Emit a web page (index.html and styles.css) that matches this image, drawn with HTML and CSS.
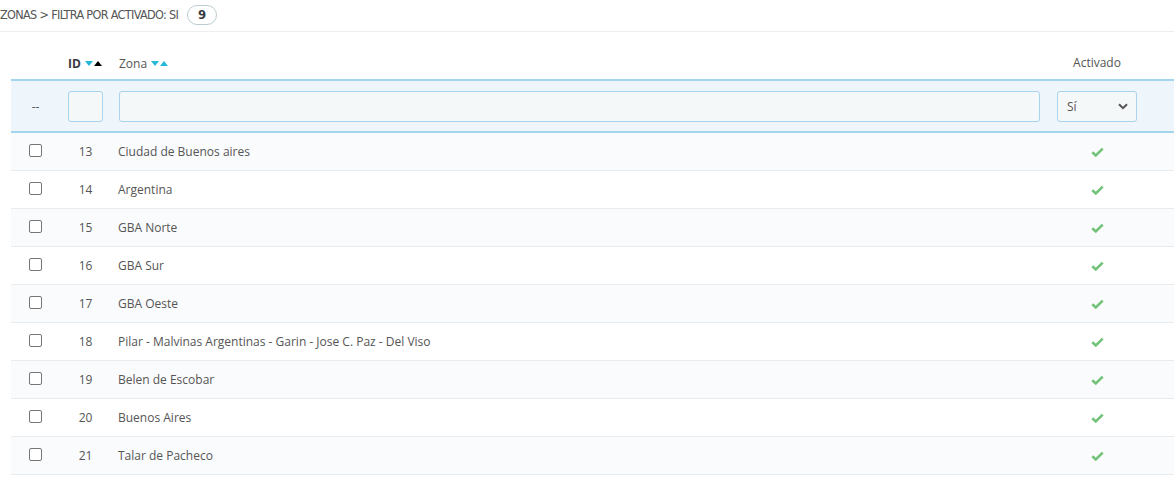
FILE: index.html
```html
<!DOCTYPE html>
<html lang="es">
<head>
    <meta charset="UTF-8">
    <title>Zonas</title>
    <link rel="stylesheet" href="styles.css">
</head>
<body>
    <div class="panel-heading">
        ZONAS &gt; FILTRA POR ACTIVADO: SI
        <span class="badge">9</span>
    </div>

    <table class="grid">
        <colgroup>
            <col class="c-check">
            <col class="c-id">
            <col class="c-name">
            <col class="c-active">
            <col class="c-actions">
        </colgroup>
        <thead>
            <tr class="heading">
                <th></th>
                <th><b class="title">ID</b><span class="sort"><i class="down"></i><i class="up active"></i></span></th>
                <th><span class="title">Zona</span><span class="sort"><i class="down"></i><i class="up"></i></span></th>
                <th class="center">Activado</th>
                <th></th>
            </tr>
            <tr class="filter">
                <td class="center">--</td>
                <td><input type="text" class="field"></td>
                <td><input type="text" class="field"></td>
                <td class="center">
                    <div class="select">Sí
                        <svg width="10" height="7" viewBox="0 0 10 7"><path d="M1 1.2 5 5.2 9 1.2" fill="none" stroke="#555" stroke-width="2"/></svg>
                    </div>
                </td>
                <td></td>
            </tr>
        </thead>
        <tbody id="rows"></tbody>
    </table>

    <script>
        const zonas = [
            [13, 'Ciudad de Buenos aires'],
            [14, 'Argentina'],
            [15, 'GBA Norte'],
            [16, 'GBA Sur'],
            [17, 'GBA Oeste'],
            [18, 'Pilar - Malvinas Argentinas - Garin - Jose C. Paz - Del Viso'],
            [19, 'Belen de Escobar'],
            [20, 'Buenos Aires'],
            [21, 'Talar de Pacheco']
        ];
        const tick = '<svg width="13" height="10" viewBox="0 0 13 10"><path d="M1.3 5.2 4.8 8.4 11.7 1.6" fill="none" stroke="#72c279" stroke-width="2.6"/></svg>';
        const tbody = document.getElementById('rows');
        zonas.forEach(([id, name]) => {
            const tr = document.createElement('tr');
            tr.innerHTML = `<td class="center"><span class="box"></span></td>
                <td class="center">${id}</td>
                <td class="name">${name}</td>
                <td class="center">${tick}</td>
                <td></td>`;
            tbody.appendChild(tr);
        });
    </script>
</body>
</html>
```

FILE: styles.css
```css
* {
    margin: 0;
    padding: 0;
    box-sizing: border-box;
}

body {
    background: #fff;
    font-family: "Open Sans", sans-serif;
    font-size: 12px;
    color: #555;
}

.panel-heading {
    height: 32px;
    padding-top: 5px;
    border-bottom: 1px solid #eeeeee;
    font-family: "DejaVu Sans Condensed", "DejaVu Sans", sans-serif;
    font-size: 12.5px;
    color: #555;
    letter-spacing: -0.65px;
    display: flex;
    align-items: flex-start;
    line-height: 20px;
}

.badge {
    display: inline-block;
    margin-left: 9px;
    width: 30px;
    height: 20px;
    border: 1px solid #bbcdd2;
    border-radius: 10px;
    text-align: center;
    font-weight: bold;
    color: #363a41;
    line-height: 18px;
    font-size: 13px;
    letter-spacing: 0;
}

.grid {
    margin: 13px 0 0 11px;
    width: 1163px;
    table-layout: fixed;
    border-collapse: collapse;
}

.c-check { width: 49px; }
.c-id { width: 51px; }
.c-name { width: 937px; }
.c-active { width: 98px; }
.c-actions { width: 28px; }

th, td {
    padding: 0 8px;
    text-align: left;
    font-weight: normal;
    white-space: nowrap;
}

.center {
    text-align: center;
}

.heading th {
    height: 35px;
    color: #555;
    vertical-align: middle;
}

.heading b {
    color: #363a41;
    font-weight: bold;
}

.sort {
    display: inline-block;
    margin-left: 4px;
    vertical-align: 2px;
}

.sort i {
    display: inline-block;
    width: 0;
    height: 0;
    border-left: 4.5px solid transparent;
    border-right: 4.5px solid transparent;
    margin-right: 1px;
}

.sort .down {
    border-top: 5px solid #25b9d7;
}

.sort .up {
    border-bottom: 5px solid #25b9d7;
}

.sort .up.active {
    border-bottom-color: #000;
}

.filter td {
    height: 52px;
    background: #eef5fb;
    border-top: 2px solid #a4d5ee;
    border-bottom: 2px solid #a4d5ee;
    color: #555;
}

.field {
    display: block;
    width: 100%;
    height: 31px;
    border: 1px solid #a8d4ef;
    border-radius: 3px;
    background: #f5f8f9;
}

.select {
    display: flex;
    justify-content: space-between;
    align-items: center;
    width: 80px;
    height: 31px;
    margin: 0 auto;
    padding: 0 8px 0 9px;
    border: 1px solid #a8d4ef;
    border-radius: 3px;
    background: #f5f8f9;
    color: #555;
}

tbody td {
    height: 38px;
    border-bottom: 1px solid #e9ecee;
    color: #555;
}

tbody td.name {
    padding-left: 7px;
}

tbody tr:nth-child(odd) td {
    background: #fafbfc;
}

.box {
    display: inline-block;
    width: 13px;
    height: 13px;
    border: 1px solid #767676;
    border-radius: 2px;
    background: #fff;
    vertical-align: -1px;
}

tbody svg {
    vertical-align: -1px;
}
```
